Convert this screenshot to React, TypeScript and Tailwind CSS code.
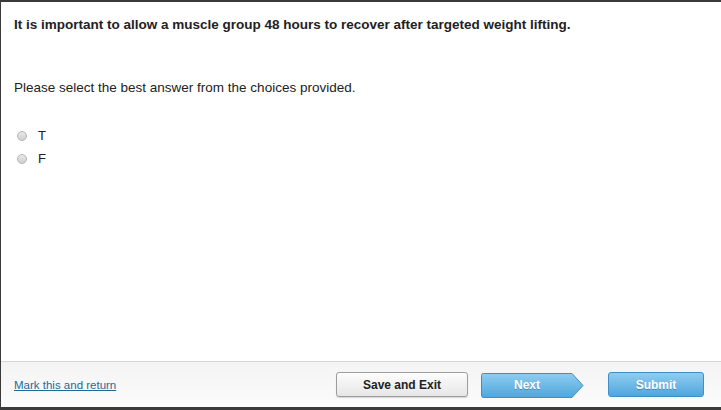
export default function App() {
  return (
    <div className="w-[721px] h-[410px] flex flex-col bg-white border-t-2 border-l border-b-[3px] border-[#3a3a3a] font-['Liberation_Sans',Arial,sans-serif] text-[#222]">
      {/* Question */}
      <div className="flex-1 px-[13px] pt-[15px]">
        <p className="text-[13.5px] font-bold leading-[16px]">
          It is important to allow a muscle group 48 hours to recover after targeted weight lifting.
        </p>
        <p className="text-[13.5px] leading-[16px] mt-[47px]">Please select the best answer from the choices provided.</p>
        <div className="mt-[32px] flex flex-col gap-[7px]">
          {['T', 'F'].map(opt => (
            <label key={opt} className="flex items-center h-[16px] text-[13px] text-[#222]">
              <span className="ml-[3px] w-[10px] h-[10px] rounded-full border border-[#b5b5b5] bg-gradient-to-b from-[#e8e8e8] to-[#d0d0d0]" />
              <span className="ml-[11px]">{opt}</span>
            </label>
          ))}
        </div>
      </div>

      {/* Footer */}
      <div className="h-[46px] border-t border-[#d6d6d6] bg-gradient-to-b from-[#f4f4f4] to-[#fbfbfb] flex items-center pl-[13px] pr-[17px]">
        <a href="#" className="text-[11.5px] text-[#1d6a97] underline mt-[3px]">Mark this and return</a>
        <button className="ml-auto w-[132px] h-[25px] rounded-[3px] border border-[#9c9c9c] bg-gradient-to-b from-[#fdfdfd] to-[#e6e6e6] text-[12px] font-bold text-[#222] shadow-[0_1px_1px_rgba(0,0,0,0.15)]">
          Save and Exit
        </button>
        <div className="relative ml-[13px] w-[103px] h-[25px] mt-[1px]">
          <svg width="103" height="25" viewBox="0 0 103 25" className="absolute inset-0">
            <defs>
              <linearGradient id="nx" x1="0" y1="0" x2="0" y2="1">
                <stop offset="0" stopColor="#8fcdf1" />
                <stop offset="1" stopColor="#4ea6dc" />
              </linearGradient>
            </defs>
            <path d="M2.5 0.5 H91 L102 12.5 L91 24.5 H2.5 Q0.5 24.5 0.5 22.5 V2.5 Q0.5 0.5 2.5 0.5 Z" fill="url(#nx)" stroke="#3f8fc4" />
          </svg>
          <span className="absolute inset-0 flex items-center justify-center pr-[11px] text-[12px] font-bold text-white [text-shadow:0_1px_0_rgba(0,0,0,0.25)]">Next</span>
        </div>
        <button className="ml-[24px] w-[96px] h-[25px] rounded-[3px] border border-[#3f8fc4] bg-gradient-to-b from-[#8fcdf1] to-[#4ea6dc] text-[12px] font-bold text-white [text-shadow:0_1px_0_rgba(0,0,0,0.25)]">
          Submit
        </button>
      </div>
    </div>
  );
}
